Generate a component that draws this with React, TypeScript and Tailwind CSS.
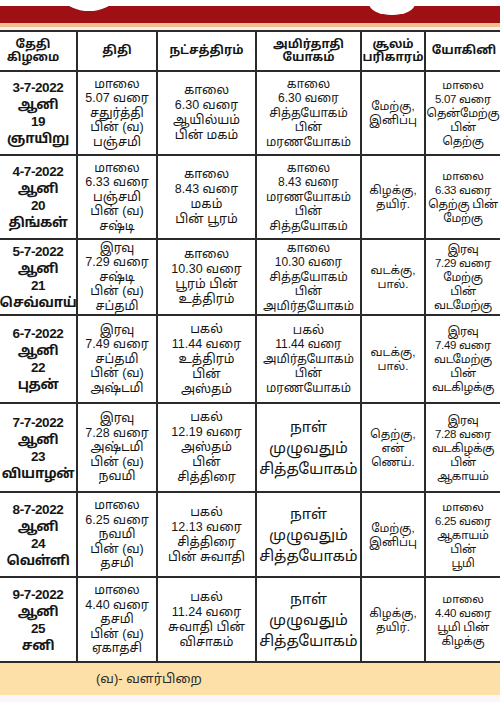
const rows = [
  {
    date: ["3-7-2022", "ஆனி", "19", "ஞாயிறு"],
    tithi: ["மாலை", "5.07 வரை", "சதுர்த்தி", "பின் (வ)", "பஞ்சமி"],
    star: ["காலை", "6.30 வரை", "ஆயில்யம்", "பின் மகம்"],
    yogam: ["காலை", "6.30 வரை", "சித்தயோகம்", "பின்", "மரணயோகம்"],
    soolam: ["மேற்கு,", "இனிப்பு"],
    yogini: ["மாலை", "5.07 வரை", "தென்மேற்கு", "பின்", "தெற்கு"],
  },
  {
    date: ["4-7-2022", "ஆனி", "20", "திங்கள்"],
    tithi: ["மாலை", "6.33 வரை", "பஞ்சமி", "பின் (வ)", "சஷ்டி"],
    star: ["காலை", "8.43 வரை", "மகம்", "பின் பூரம்"],
    yogam: ["காலை", "8.43 வரை", "மரணயோகம்", "பின்", "சித்தயோகம்"],
    soolam: ["கிழக்கு,", "தயிர்."],
    yogini: ["மாலை", "6.33 வரை", "தெற்கு பின்", "மேற்கு"],
  },
  {
    date: ["5-7-2022", "ஆனி", "21", "செவ்வாய்"],
    tithi: ["இரவு", "7.29 வரை", "சஷ்டி", "பின் (வ)", "சப்தமி"],
    star: ["காலை", "10.30 வரை", "பூரம் பின்", "உத்திரம்"],
    yogam: ["காலை", "10.30 வரை", "சித்தயோகம்", "பின்", "அமிர்தயோகம்"],
    soolam: ["வடக்கு,", "பால்."],
    yogini: ["இரவு", "7.29 வரை", "மேற்கு", "பின்", "வடமேற்கு"],
  },
  {
    date: ["6-7-2022", "ஆனி", "22", "புதன்"],
    tithi: ["இரவு", "7.49 வரை", "சப்தமி", "பின் (வ)", "அஷ்டமி"],
    star: ["பகல்", "11.44 வரை", "உத்திரம்", "பின்", "அஸ்தம்"],
    yogam: ["பகல்", "11.44 வரை", "அமிர்தயோகம்", "பின்", "மரணயோகம்"],
    soolam: ["வடக்கு,", "பால்."],
    yogini: ["இரவு", "7.49 வரை", "வடமேற்கு", "பின்", "வடகிழக்கு"],
  },
  {
    date: ["7-7-2022", "ஆனி", "23", "வியாழன்"],
    tithi: ["இரவு", "7.28 வரை", "அஷ்டமி", "பின் (வ)", "நவமி"],
    star: ["பகல்", "12.19 வரை", "அஸ்தம்", "பின்", "சித்திரை"],
    yogam: ["நாள்", "முழுவதும்", "சித்தயோகம்"],
    big: true,
    soolam: ["தெற்கு,", "என்", "ணெய்."],
    yogini: ["இரவு", "7.28 வரை", "வடகிழக்கு", "பின்", "ஆகாயம்"],
  },
  {
    date: ["8-7-2022", "ஆனி", "24", "வெள்ளி"],
    tithi: ["மாலை", "6.25 வரை", "நவமி", "பின் (வ)", "தசமி"],
    star: ["பகல்", "12.13 வரை", "சித்திரை", "பின் சுவாதி"],
    yogam: ["நாள்", "முழுவதும்", "சித்தயோகம்"],
    big: true,
    soolam: ["மேற்கு,", "இனிப்பு"],
    yogini: ["மாலை", "6.25 வரை", "ஆகாயம்", "பின்", "பூமி"],
  },
  {
    date: ["9-7-2022", "ஆனி", "25", "சனி"],
    tithi: ["மாலை", "4.40 வரை", "தசமி", "பின் (வ)", "ஏகாதசி"],
    star: ["பகல்", "11.24 வரை", "சுவாதி பின்", "விசாகம்"],
    yogam: ["நாள்", "முழுவதும்", "சித்தயோகம்"],
    big: true,
    soolam: ["கிழக்கு,", "தயிர்."],
    yogini: ["மாலை", "4.40 வரை", "பூமி பின்", "கிழக்கு"],
  },
];

const Lines = ({ lines, className }: { lines: string[]; className: string }) => (
  <div className={`flex flex-col items-center justify-center bg-white text-center whitespace-nowrap ${className}`}>
    {lines.map((l, i) => (
      <span key={i}>{l}</span>
    ))}
  </div>
);

const head = "text-[12px] font-bold leading-[13.5px]";

export default function App() {
  return (
    <div
      className="relative w-[500px] h-[702px] overflow-hidden bg-white text-[#161616]"
      style={{ fontFamily: '"Liberation Sans", "Noto Sans Tamil", "Lohit Tamil", "Noto Sans", sans-serif' }}
    >
      {/* red banner */}
      <div className="relative mt-[6px] h-[17px] bg-[#9f1014]">
        <div className="absolute left-[66px] top-[-17px] w-[46px] h-[22px] rounded-[50%] bg-white" />
        <div className="absolute left-[369px] top-[-14px] w-[46px] h-[23px] rounded-[50%] bg-white" />
      </div>
      <div className="h-[4px] bg-[#f2be8c]" />
      <div className="h-[3px] bg-[#fcf1e6]" />

      <div className="ml-[-12px] w-[516px] grid grid-cols-[86px_78px_97px_103px_62px_76px] grid-rows-[38px_82px_82px_74px_86px_87px_83px_83px] gap-[2px] p-[2px] bg-[#2b2b2b]">
        {/* header */}
        <Lines lines={["தேதி", "கிழமை"]} className={head} />
        <Lines lines={["திதி"]} className={head} />
        <Lines lines={["நட்சத்திரம்"]} className={head} />
        <Lines lines={["அமிர்தாதி", "யோகம்"]} className={head} />
        <Lines lines={["சூலம்", "பரிகாரம்"]} className={head} />
        <Lines lines={["யோகினி"]} className={head} />

        {rows.map((r, i) => (
          <div key={i} className="contents">
            <Lines lines={r.date} className="pl-[10px] text-[13.5px] font-bold leading-[17px] tracking-[-0.4px]" />
            <Lines lines={r.tithi} className="text-[12.5px] leading-[14.5px]" />
            <Lines lines={r.star} className="text-[12.5px] leading-[15px]" />
            <Lines
              lines={r.yogam}
              className={r.big ? "text-[15px] leading-[21px]" : "text-[12px] leading-[14.5px]"}
            />
            <Lines lines={r.soolam} className="text-[11.5px] leading-[14px]" />
            <Lines lines={r.yogini} className="pr-[2px] text-[11.5px] leading-[14px] tracking-[-0.3px]" />
          </div>
        ))}
      </div>

      <div className="h-[32px] bg-[#fce0a7] flex items-center pl-[96px] text-[13px] text-[#2a2a2a]">
        (வ)- வளர்பிறை
      </div>
      <div className="h-[7px] bg-[#f8f6f8]" />
    </div>
  );
}
